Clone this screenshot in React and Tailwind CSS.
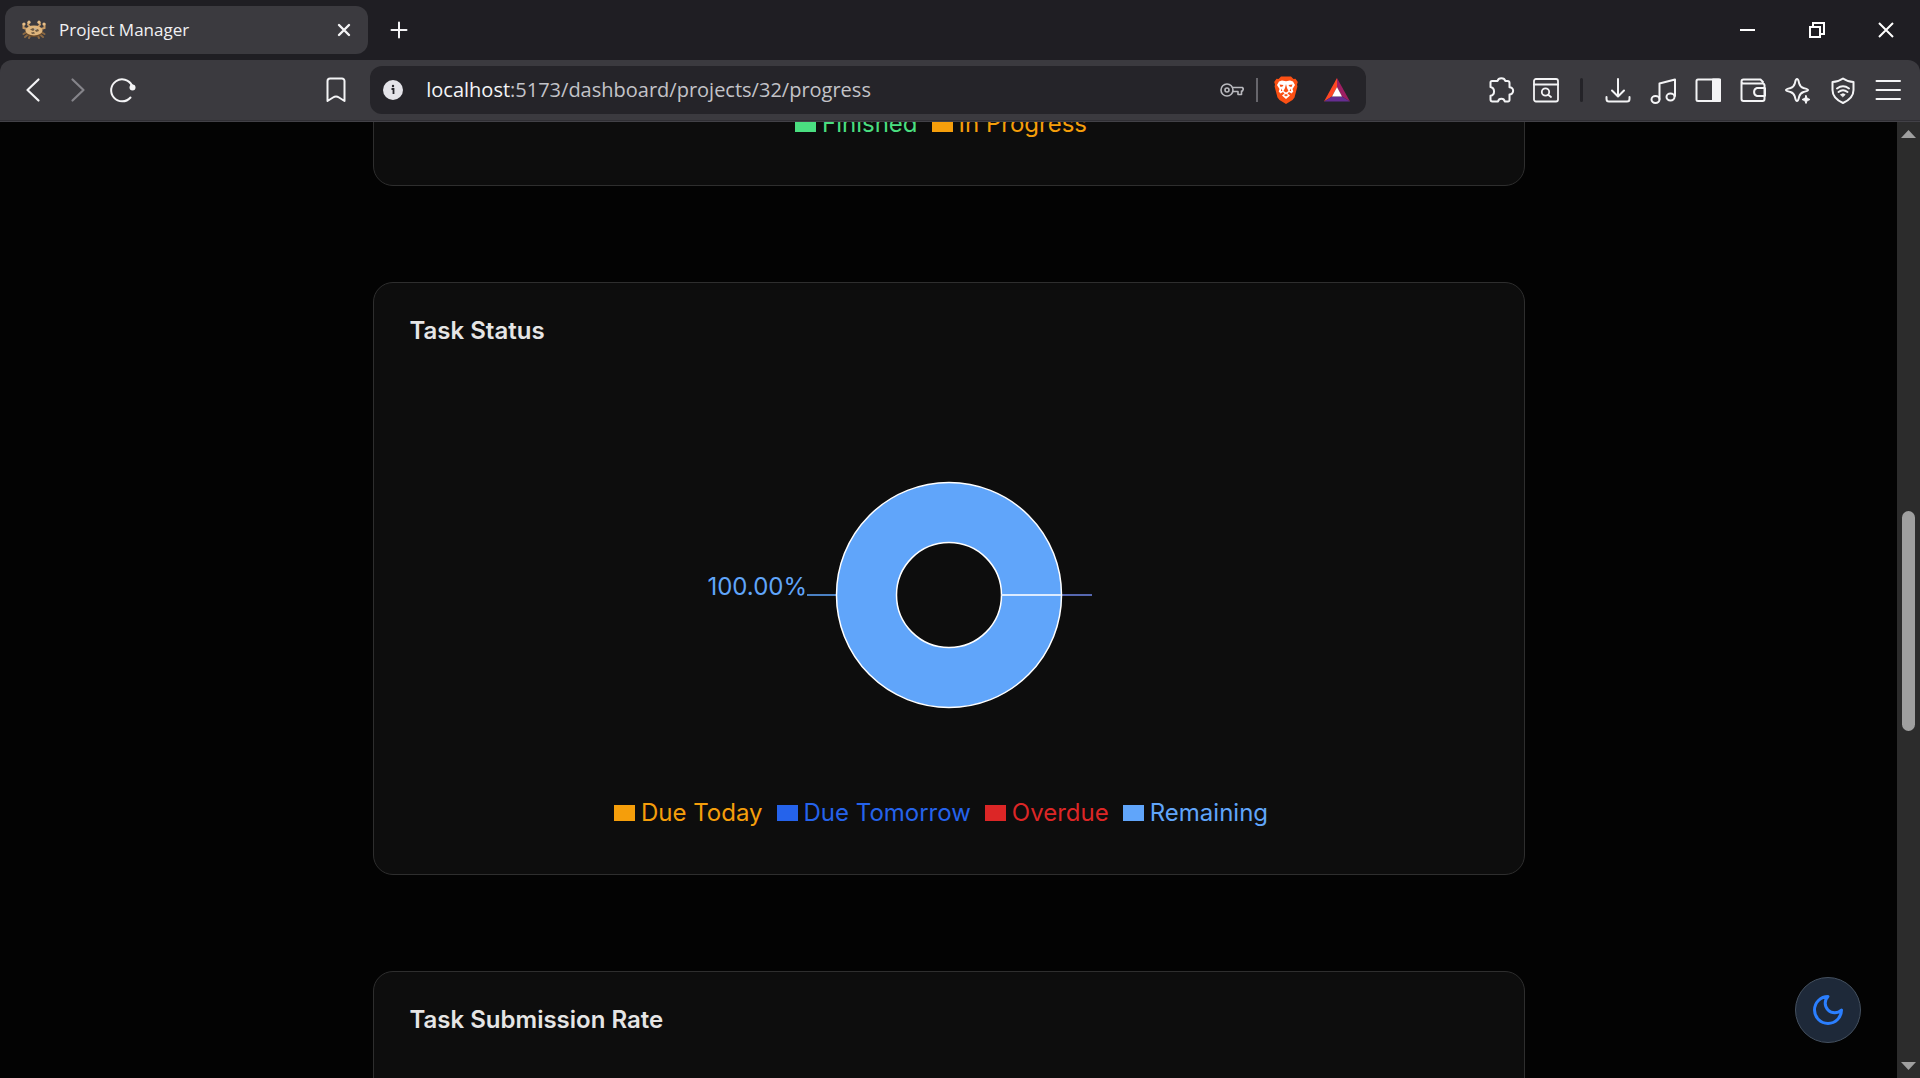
import React from "react";

const ICON = "#f4f4f6";

function Svg({ size = 30, children, sw = 2, ...rest }) {
  return (
    <svg width={size} height={size} viewBox={`0 0 ${size} ${size}`} fill="none" stroke={ICON} strokeWidth={sw} strokeLinecap="round" strokeLinejoin="round" aria-hidden="true" {...rest}>
      {children}
    </svg>
  );
}

function ToolButton({ label, children }) {
  return (
    <button type="button" aria-label={label} className="flex h-12 w-[45px] shrink-0 items-center justify-center">
      {children}
    </button>
  );
}

function WindowButton({ label, children }) {
  return (
    <button type="button" aria-label={label} className="flex h-[58px] w-[69px] items-center justify-center">
      {children}
    </button>
  );
}

function Favicon() {
  return (
    <svg width="24" height="20" viewBox="0 0 24 20" fill="none" aria-hidden="true">
      <g stroke="#8d6a43" strokeWidth="2" strokeLinecap="round">
        <path d="M5 12 1.500 14M6 14.500 3 17M8 16 7 18M19 12l3.500 2M18 14.500l3 2.500M16 16l1 2" />
        <path d="M5 9 1.500 8 1.500 4M8 7 6 4.500 7 2M19 9l3.500-1 0-4M16 7l2-2.500-1-2.500" stroke="#c99b64" />
      </g>
      <ellipse cx="12" cy="11.500" rx="8.500" ry="5.500" fill="#6b4b2b" />
      <ellipse cx="12" cy="10.500" rx="8.500" ry="5" fill="#dfb57c" />
      <g fill="#e6be88">
        <circle cx="2" cy="4" r="1.600" />
        <circle cx="7" cy="2.200" r="1.600" />
        <circle cx="17" cy="2.200" r="1.600" />
        <circle cx="22" cy="4" r="1.600" />
      </g>
      <path d="M8 9.500 11 8l2 1.500L11 11zM13 10l3-1 1 2-3 1zM9 12.500l3-.5 1 1.500-3 .5z" fill="#6f5a42" />
      <path d="M12 8.500l2-.5.500 1.500-2 .5z" fill="#b8b3a6" />
    </svg>
  );
}

function TabStrip() {
  return (
    <header className="flex h-[60px] shrink-0 items-center bg-[#1f1e23] pl-[5px]">
      <div className="flex h-12 w-[363px] items-center rounded-xl bg-[#3b3a3f] pr-3 pl-[17px]">
        <Favicon />
        <span className="ml-[13px] flex-1 font-['Open_Sans',sans-serif] text-[17px] leading-6 text-[#f1f1f3]">Project Manager</span>
        <button type="button" aria-label="Close tab" className="flex size-6 items-center justify-center">
          <Svg size={14} sw={2.4}><path d="M2 2l10 10M12 2 2 12" /></Svg>
        </button>
      </div>
      <button type="button" aria-label="New tab" className="ml-[7px] flex size-12 items-center justify-center">
        <Svg size={18}><path d="M9 1.500v15M1.500 9h15" /></Svg>
      </button>
      <div className="ml-auto flex">
        <WindowButton label="Minimize">
          <Svg size={15} sw={2} strokeLinecap="butt"><path d="M0 7h15" stroke="#fff" /></Svg>
        </WindowButton>
        <WindowButton label="Restore">
          <Svg size={16} strokeLinecap="butt" strokeLinejoin="miter"><path d="M1 5h10v10H1zM4 5V1h11v11h-4" stroke="#fff" /></Svg>
        </WindowButton>
        <WindowButton label="Close window">
          <Svg size={16} strokeLinecap="butt"><path d="M1 1l14 14M15 1 1 15" stroke="#fff" /></Svg>
        </WindowButton>
      </div>
    </header>
  );
}

function AddressBar() {
  return (
    <div className="ml-3 flex h-12 min-w-0 flex-[965_1_0%] items-center rounded-xl bg-[#252429] pr-4 pl-[13px]">
      <button type="button" aria-label="Site information">
        <svg width="20" height="20" viewBox="0 0 20 20" aria-hidden="true">
          <circle cx="10" cy="10" r="10" fill="#e4e3e8" />
          <path d="M8.500 9H10.500V14" fill="none" stroke="#252429" strokeWidth="1.800" />
          <circle cx="10" cy="6" r="1.200" fill="#252429" />
        </svg>
      </button>
      <a href="#progress" className="ml-[23px] flex-1 truncate font-['Open_Sans',sans-serif] text-[20px] leading-7 text-[#c3c3c8]">
        <span className="text-[#f4f4f6]">localhost</span>:5173/dashboard/projects/32/progress
      </a>
      <button type="button" aria-label="Saved passwords">
        <Svg size={24} sw={1.6} stroke="#b9b9be">
          <circle cx="7" cy="12" r="6" />
          <circle cx="7" cy="12" r="2" />
          <path d="M12.500 9.500H22.500L23.300 11 22.500 13H21.500V16.500H18V13.500H12.800" />
        </Svg>
      </button>
      <span className="mx-3 h-6 w-0.5 bg-[#67666c]" />
      <button type="button" aria-label="Brave Shields" className="ml-1">
        <svg width="24" height="28" viewBox="0 0 24 28" aria-hidden="true">
          <path d="M7 .5H17L19.500 3 21.500 2.700 23.800 6 23 8.500 23.400 10.500 20.500 21.500 18.500 24 12 28 5.500 24 3.500 21.500.6 10.500 1 8.500.2 6 2.500 2.700 4.500 3z" fill="#fb5014" />
          <path d="M8 4.500 12 5.200 16 4.500 19 5.500 21 9 18.500 13 19.300 15.500 17.500 17.500 15 16 13.500 17.500 16 19.500 12 23 8 19.500 10.500 17.500 9 16 6.500 17.500 4.700 15.500 5.500 13 3 9 5 5.500z" fill="#fff" />
          <path d="M5.500 8.500 9.500 9 8.500 10.500 6.500 11zM18.500 8.500 14.500 9 15.500 10.500 17.500 11zM12 8l-1 4-1.500 3L12 16.500 14.500 15 13 12zM9.800 19 12 18l2.200 1L12 20.500zM7 12.500l1.500 2.500L7 15zM17 12.500 15.500 15 17 15z" fill="#fb5014" />
        </svg>
      </button>
      <button type="button" aria-label="Brave Rewards" className="ml-[26px]">
        <svg width="26" height="24" viewBox="0 0 26 24" aria-hidden="true">
          <path d="M13 0 0 23.500 8 18.500 13 9z" fill="#ff4724" />
          <path d="M13 0 26 23.500 18 18.500 13 9z" fill="#9e1f63" />
          <path d="M0 23.500H26L18 18.500H8z" fill="#662d91" />
          <path d="M13 9 18 18.500H8z" fill="#fff" />
        </svg>
      </button>
    </div>
  );
}

function Toolbar() {
  return (
    <nav aria-label="Browser toolbar" className="shrink-0 border-b border-[#424147] bg-[#1f1e23]">
      <div className="flex h-[61px] items-center rounded-t-xl border-b border-[#302f34] bg-[#3b3a3f] px-[10px]">
        <ToolButton label="Back"><Svg sw={2.2}><path d="M20.500 4.500 9.500 15 20.500 25.500" /></Svg></ToolButton>
        <ToolButton label="Forward"><Svg sw={2.2} stroke="#85848a"><path d="M9.500 4.500 20.500 15 9.500 25.500" /></Svg></ToolButton>
        <ToolButton label="Reload">
          <Svg><path d="M22.500 22.500A11 11 0 1 1 24 10.500" /><circle cx="24.500" cy="12.500" r="3" fill={ICON} stroke="none" /><path d="M23.500 10v3" /></Svg>
        </ToolButton>
        <span className="flex-[168_1_0%]" />
        <ToolButton label="Bookmark this page">
          <Svg><path d="M6.500 26V6a2.500 2.500 0 0 1 2.500-2.500H21A2.500 2.500 0 0 1 23.500 6V26L18 22.500Q15 20.500 12 22.500z" /></Svg>
        </ToolButton>
        <AddressBar />
        <span className="flex-[112_1_0%]" />
        <ToolButton label="Extensions">
          <Svg><path d="M4.500 7.500A1.500 1.500 0 0 1 6 6H11.500A4 3.500 0 0 1 19.300 6H21.500A2 2 0 0 1 23.500 8V12.200A3.600 3.600 0 0 1 23.500 19.500V25A1.500 1.500 0 0 1 22 26.500H18.800A3.500 3.500 0 0 0 12 26.500H6.500A2 2 0 0 1 4.500 24.500V20.800A4.500 4.500 0 0 0 4.500 12z" /></Svg>
        </ToolButton>
        <ToolButton label="Search tabs">
          <Svg sw={1.8}><rect x="3" y="4" width="24" height="22.500" rx="2" /><path d="M3 9.500H27" /><circle cx="14.500" cy="17" r="3.700" /><path d="M17.500 20 20 22" /></Svg>
        </ToolButton>
        <span className="mx-3 h-6 w-[3px] rounded-full bg-[#242328]" />
        <ToolButton label="Downloads">
          <Svg><path d="M15 4V21M9 15.500 15 21.500 21 15.500M3.500 22V24A2.500 2.500 0 0 0 6 26.500H24A2.500 2.500 0 0 0 26.500 24V22" /></Svg>
        </ToolButton>
        <ToolButton label="Playlist">
          <Svg><path d="M11.500 24V8.500L27 4.500V21" /><ellipse cx="7.500" cy="24.500" rx="4" ry="3.400" /><ellipse cx="22.500" cy="22" rx="4" ry="3.400" /></Svg>
        </ToolButton>
        <ToolButton label="Sidebar">
          <Svg><rect x="3.500" y="4.500" width="23.500" height="21.500" rx="1.500" /><path d="M20 4.500H27V26H20z" fill={ICON} /></Svg>
        </ToolButton>
        <ToolButton label="Wallet">
          <Svg><path d="M26.500 12V10A2 2 0 0 0 24.500 8.500H5.500A2 2 0 0 1 5.500 4.500H22.500L25 7M3.500 6.500V24A2 2 0 0 0 5.500 26H24.500A2 2 0 0 0 26.500 24V12.500M27 13H19A4.200 4.200 0 0 0 19 21H27z" /></Svg>
        </ToolButton>
        <ToolButton label="Leo AI">
          <Svg><path d="M14 4C15.500 4 15.500 6 16.200 8.500 17 11.500 18 12.200 20.500 13 23 13.700 25 14 25 15S23 16.300 20.500 17C18 17.800 17 18.500 16.200 21.500 15.500 24 15.500 26 14 26S12.500 24 11.800 21.500C11 18.500 10 17.800 7.500 17 5 16.300 3 16 3 15S5 13.700 7.500 13C10 12.200 11 11.500 11.800 8.500 12.500 6 12.500 4 14 4z" /><path d="M23 20.500 24.200 23.300 27 24.500 24.200 25.700 23 28.500 21.800 25.700 19 24.500 21.800 23.300z" fill={ICON} strokeWidth="1" /></Svg>
        </ToolButton>
        <ToolButton label="VPN">
          <Svg><path d="M15 3.500Q20 7 25.500 7V15C25.500 21.500 20.500 25.500 15 28 9.500 25.500 4.500 21.500 4.500 15V7Q10 7 15 3.500z" /><path d="M9 13.500Q15 9 21 13.500M10.500 17Q15 13.500 19.500 17" /><path d="M12.800 19.500Q15 18 17.200 19.500L15 21.500z" fill={ICON} strokeWidth="1" /></Svg>
        </ToolButton>
        <ToolButton label="Menu"><Svg><path d="M3.500 6H27M3.500 15H27M3.500 24H27" /></Svg></ToolButton>
      </div>
    </nav>
  );
}

function Card({ children }) {
  return <section className="w-full rounded-[20px] border border-[#2e2e2e] bg-[#0d0d0d] p-9">{children}</section>;
}

function CardTitle({ children }) {
  return <h2 className="text-2xl leading-6 font-semibold text-[#e5e5e5]">{children}</h2>;
}

const FINISHED = [
  { name: "Finished", text: "text-[#4ade80]", box: "bg-[#4ade80]" },
  { name: "In Progress", text: "text-[#f59e0b]", box: "bg-[#f59e0b]" },
];

const STATUS = [
  { name: "Due Today", text: "text-[#f59e0b]", box: "bg-[#f59e0b]" },
  { name: "Due Tomorrow", text: "text-[#2563eb]", box: "bg-[#2563eb]" },
  { name: "Overdue", text: "text-[#dc2626]", box: "bg-[#dc2626]" },
  { name: "Remaining", text: "text-[#60a5fa]", box: "bg-[#60a5fa]" },
];

function Legend({ items }) {
  return (
    <ul className="flex justify-center gap-[14px] pr-[15px] text-2xl leading-[30px]">
      {items.map((item) => (
        <li key={item.name} className={`flex items-center gap-1.5 ${item.text}`}>
          <span className={`h-4 w-[21px] ${item.box}`} />
          {item.name}
        </li>
      ))}
    </ul>
  );
}

function StatusDonut() {
  return (
    <svg width="500" height="250" viewBox="0 0 500 250" className="mx-auto block" role="img" aria-label="Remaining 100.00%">
      <path d="M108 125H137" stroke="#4a80c2" strokeWidth="2" />
      <path d="M363 125H393" stroke="#5667b0" strokeWidth="2" />
      <circle cx="250" cy="125" r="82.500" fill="none" stroke="#60a5fa" strokeWidth="60" />
      <circle cx="250" cy="125" r="112.500" fill="none" stroke="#fff" strokeWidth="1.500" />
      <circle cx="250" cy="125" r="52.500" fill="none" stroke="#fff" strokeWidth="1.500" />
      <path d="M302 125H362" stroke="#dcebff" strokeWidth="2" />
      <text x="108" y="125" textAnchor="end" fill="#60a5fa" fontSize="24">100.00%</text>
    </svg>
  );
}

function Scrollbar() {
  return (
    <div className="flex w-[23px] shrink-0 flex-col items-center bg-[#2c2c2c] py-2" aria-hidden="true">
      <svg width="15" height="8" viewBox="0 0 15 8"><path d="M0 8 7.500 0 15 8z" fill="#9f9f9f" /></svg>
      <div className="flex-[373_1_0%]" />
      <div className="w-[13px] flex-[220_1_0%] rounded-full bg-[#9f9f9f]" />
      <div className="flex-[331_1_0%]" />
      <svg width="15" height="8" viewBox="0 0 15 8"><path d="M0 0 7.500 8 15 0z" fill="#9f9f9f" /></svg>
    </div>
  );
}

export default function App() {
  return (
    <div className="flex h-screen flex-col overflow-hidden bg-black font-['Inter',sans-serif]">
      <TabStrip />
      <Toolbar />
      <div className="relative flex min-h-0 flex-1">
        <main className="flex min-w-0 flex-1 flex-col overflow-hidden bg-[#030303]">
          <div className="mx-auto -mt-[50px] flex w-full max-w-[1152px] flex-col gap-24">
            <Card>
              <Legend items={FINISHED} />
              <div className="h-[10px]" />
            </Card>
            <Card>
              <CardTitle>Task Status</CardTitle>
              <div className="pt-[127px] pb-[78px]">
                <StatusDonut />
              </div>
              <Legend items={STATUS} />
              <div className="h-[10px]" />
            </Card>
            <Card>
              <CardTitle>Task Submission Rate</CardTitle>
              <div className="h-[500px]" />
            </Card>
          </div>
        </main>
        <button type="button" aria-label="Toggle dark mode" className="absolute right-[59px] bottom-[35px] flex size-[66px] items-center justify-center rounded-full border border-[#44505f] bg-[#1e2939]">
          <svg width="36" height="36" viewBox="0 0 24 24" fill="none" stroke="#2b7fff" strokeWidth="2" strokeLinecap="round" strokeLinejoin="round" aria-hidden="true">
            <path d="M12 3a6 6 0 0 0 9 9 9 9 0 1 1-9-9Z" />
          </svg>
        </button>
        <Scrollbar />
      </div>
    </div>
  );
}
